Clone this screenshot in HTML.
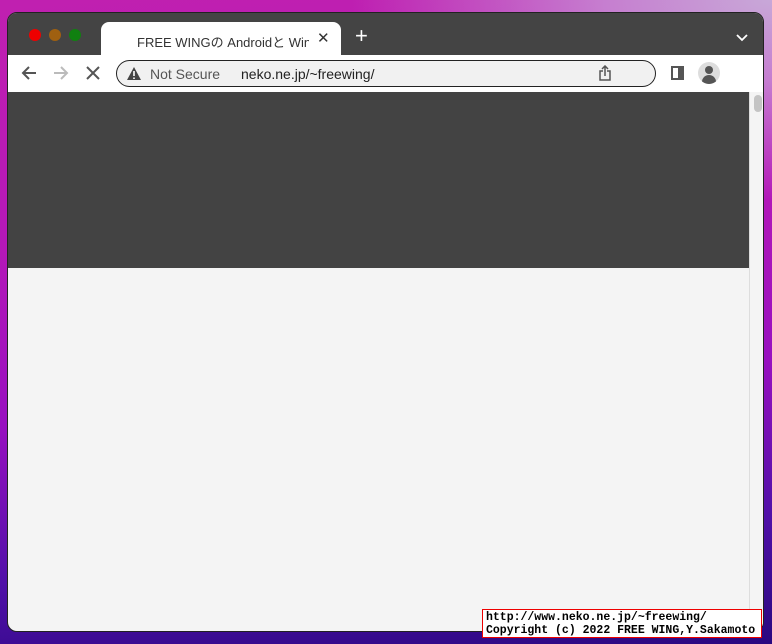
<!DOCTYPE html>
<html><head><meta charset="utf-8"><style>
*{margin:0;padding:0;box-sizing:border-box}
body{width:772px;height:644px;overflow:hidden;position:relative;font-family:"Liberation Sans","Noto Sans CJK JP",sans-serif;
background:linear-gradient(175deg,#c020b0 0%,#b418b8 35%,#9810c0 60%,#5010a8 82%,#2a0880 100%)}
.bgtr{position:absolute;right:0;top:0;width:772px;height:300px;background:radial-gradient(ellipse 420px 200px at 100% 0%,#c8a8d8 0%,rgba(200,150,215,.8) 40%,rgba(190,60,190,0) 100%)}
.win{position:absolute;left:7px;top:12px;width:757px;height:620px;border-radius:10px;overflow:hidden;background:#f4f4f4;border:1px solid #222}
.tabbar{position:absolute;left:0;top:0;width:100%;height:42px;background:#444}
.dot{position:absolute;top:16px;width:12px;height:12px;border-radius:50%}
.tab{position:absolute;left:93px;top:9px;width:240px;height:34px;background:#fff;border-radius:8px 8px 0 0}
.tab span{position:absolute;left:36px;top:10px;font-size:13px;color:#333;white-space:nowrap;width:172px;overflow:hidden}
.tab b{position:absolute;left:216px;top:7px;font-weight:normal;font-size:15px;color:#333}
.tool{position:absolute;left:0;top:42px;width:100%;height:37px;background:#fff}
.url{position:absolute;left:108px;top:5px;width:540px;height:27px;border:1.5px solid #222;border-radius:14px;background:#f1f1f1}
.content{position:absolute;left:0;top:79px;width:741px;height:176px;background:#434343}
.sb{position:absolute;left:741px;top:79px;width:16px;height:541px;background:#f4f4f4;border-left:1px solid #ddd}
.thumb{position:absolute;left:4px;top:3px;width:8px;height:17px;border-radius:4px;background:#c4c4c4}
.foot{position:absolute;left:482px;top:609px;width:280px;height:29px;background:#fff;border:1.5px solid #e00;font-family:"Liberation Mono",monospace;font-size:11.5px;font-weight:bold;line-height:13px;padding:1px 3px;color:#000;white-space:nowrap}
</style></head><body>
<div class="bgtr"></div>
<div class="win">
 <div class="tabbar">
  <div class="dot" style="left:21px;background:#e00"></div>
  <div class="dot" style="left:41px;background:#a06010"></div>
  <div class="dot" style="left:61px;background:#108010"></div>
  <div class="tab"><span>FREE WINGの Androidと Windo</span><b>✕</b></div>
  <div style="position:absolute;left:347px;top:12px;color:#fff;font-size:22px;line-height:22px">+</div>
  <svg style="position:absolute;left:728px;top:21px" width="12" height="8"><path d="M1 1l5 5 5-5" stroke="#fff" stroke-width="1.8" fill="none"/></svg>
 </div>
 <div class="tool">
  <svg style="position:absolute;left:13px;top:10px" width="16" height="16"><path d="M15 8H2M8 2L2 8l6 6" stroke="#555" stroke-width="2" fill="none"/></svg>
  <svg style="position:absolute;left:45px;top:10px" width="16" height="16"><path d="M1 8h13M8 2l6 6-6 6" stroke="#bbb" stroke-width="2" fill="none"/></svg>
  <svg style="position:absolute;left:78px;top:11px" width="14" height="14"><path d="M1 1l12 12M13 1L1 13" stroke="#555" stroke-width="2"/></svg>
  <div class="url">
   <svg style="position:absolute;left:10px;top:6px" width="14" height="13"><path d="M7 0L14 13H0z" fill="#444"/><path d="M7 4v5M7 10.5v1.5" stroke="#fff" stroke-width="1.6"/></svg>
   <span style="position:absolute;left:33px;top:5px;font-size:14px;color:#555">Not Secure</span>
   <span style="position:absolute;left:124px;top:5px;font-size:14px;color:#222">neko.ne.jp/~freewing/</span>
   <svg style="position:absolute;left:482px;top:4px" width="12" height="16"><path d="M4 6H1v9h10V6H8M6 11V1M3 4l3-3 3 3" stroke="#555" stroke-width="1.5" fill="none"/></svg>
  </div>
  <div style="position:absolute;left:663px;top:11px;width:13px;height:14px;border:2px solid #555;border-right-width:6px"></div>
  <div style="position:absolute;left:690px;top:7px;width:22px;height:22px;border-radius:50%;background:#ddd;overflow:hidden">
   <div style="position:absolute;left:7px;top:4px;width:8px;height:8px;border-radius:50%;background:#555"></div>
   <div style="position:absolute;left:4px;top:13px;width:14px;height:10px;border-radius:7px 7px 0 0;background:#555"></div>
  </div>
 </div>
 <div class="content"></div>
 <div class="sb"><div class="thumb"></div></div>
</div>
<div class="foot">http://www.neko.ne.jp/~freewing/<br>Copyright (c) 2022 FREE WING,Y.Sakamoto</div>
</body></html>
